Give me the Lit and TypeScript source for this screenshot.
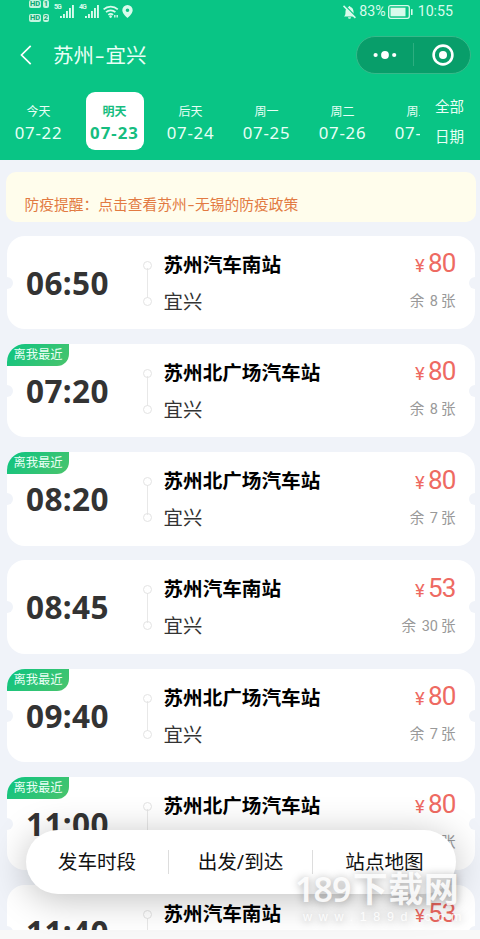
import { LitElement, css, html, nothing, svg } from 'lit'
import { customElement, property } from 'lit/decorators.js'
import { classMap } from 'lit/directives/class-map.js'

interface Trip {
  time: string
  from: string
  to: string
  price: number
  left: number
  nearest?: boolean
}

const trips: Trip[] = [
  { time: '06:50', from: '苏州汽车南站', to: '宜兴', price: 80, left: 8 },
  { time: '07:20', from: '苏州北广场汽车站', to: '宜兴', price: 80, left: 8, nearest: true },
  { time: '08:20', from: '苏州北广场汽车站', to: '宜兴', price: 80, left: 7, nearest: true },
  { time: '08:45', from: '苏州汽车南站', to: '宜兴', price: 53, left: 30 },
  { time: '09:40', from: '苏州北广场汽车站', to: '宜兴', price: 80, left: 7, nearest: true },
  { time: '11:00', from: '苏州北广场汽车站', to: '宜兴', price: 80, left: 7, nearest: true },
  { time: '11:40', from: '苏州汽车南站', to: '宜兴', price: 53, left: 30 },
]

const days = [
  { label: '今天', date: '07-22' },
  { label: '明天', date: '07-23', active: true },
  { label: '后天', date: '07-24' },
  { label: '周一', date: '07-25' },
  { label: '周二', date: '07-26' },
  { label: '周三', date: '07-27' },
]

@customElement('status-bar')
export class StatusBar extends LitElement {
  private renderSignal(label: string) {
    return html`
      <span class="net">${label}</span>
      <svg class="signal" width="14" height="13" viewBox="0 0 14 13" fill="currentColor">
        ${[2, 4, 7, 10, 13].map((h, i) => svg`<rect x=${i * 3} y=${13 - h} width="1.9" height=${h} />`)}
      </svg>
    `
  }

  protected render() {
    return html`
      <div class="sims">
        <div><b class="hd">HD</b><b>1</b></div>
        <div><b class="hd">HD</b><b>2</b></div>
      </div>
      ${this.renderSignal('5G')} ${this.renderSignal('4G')}
      <svg width="16" height="13" viewBox="0 0 16 13" fill="none" stroke="currentColor" stroke-width="1.7">
        <path d="M.6 4.4a10.5 10.5 0 0 1 14.2 0M3 7.2a7 7 0 0 1 9.4 0M5.3 9.8a3.7 3.7 0 0 1 4.8 0" />
        <circle cx="7.6" cy="11.6" r="1.3" fill="currentColor" stroke="none" />
        <path d="M11.8 10v2.6M14.2 10v2.6" stroke-width="1.4" />
      </svg>
      <svg class="pin" width="11" height="13" viewBox="0 0 11 13" fill="currentColor">
        <path
          fill-rule="evenodd"
          d="M5.5 0A5.2 5.2 0 0 0 .3 5.2C.3 8.6 5.5 13 5.5 13s5.2-4.4 5.2-7.8A5.2 5.2 0 0 0 5.5 0zm0 3.5a1.8 1.8 0 1 1 0 3.6 1.8 1.8 0 0 1 0-3.6z"
        />
      </svg>
      <span class="space"></span>
      <svg width="13" height="14" viewBox="0 0 13 14" fill="currentColor">
        <path
          d="M1 11.5c1.200-1 1.500-2 1.500-5C2.500 4 3.800 2.300 5.600 1.900a.9.9 0 0 1 1.800 0c1.800.4 3.100 2.100 3.100 4.600 0 3 .3 4 1.500 5zM5 12.200h3a1.500 1.500 0 0 1-3 0z"
        />
        <path d="M1.7.3 13.2 11.9" stroke="#09c585" stroke-width="1.5" />
        <path d="M.5.9 12.4 12.9" stroke="currentColor" stroke-width="1.5" />
      </svg>
      <span class="percent">83%</span>
      <svg class="battery" width="25" height="14" viewBox="0 0 25 14" fill="currentColor">
        <rect x=".7" y=".7" width="20.6" height="12.6" rx="2" fill="none" stroke="currentColor" stroke-width="1.3" />
        <rect x="2.5" y="2.7" width="15" height="8.6" />
        <rect x="23" y="4" width="1.6" height="6" rx=".6" />
      </svg>
      <span class="clock">10:55</span>
    `
  }

  static styles = css`
    :host {
      display: flex;
      align-items: center;
      height: 23px;
      padding: 0 27px 0 29px;
      color: #d9fbec;
      font: 14.2px / 23px Roboto, sans-serif;
    }
    .sims {
      display: flex;
      flex-direction: column;
      gap: 6px;
      height: 23px;
      margin-right: 5px;
    }
    .sims div {
      display: flex;
      gap: 2px;
    }
    b {
      width: 6px;
      height: 8px;
      border-radius: 2px;
      background: #c3f5e0;
      color: #09a771;
      text-align: center;
      font-size: 7.5px;
      line-height: 8px;
    }
    .hd {
      width: 12px;
    }
    .net {
      align-self: flex-start;
      width: 6px;
      margin-top: 3px;
      font-size: 7px;
      font-weight: bold;
      line-height: 8px;
      letter-spacing: -1px;
    }
    .signal {
      margin-right: 5px;
    }
    .signal + svg {
      margin-left: -1px;
    }
    .pin {
      margin-left: 3px;
    }
    .space {
      flex: 1;
    }
    .percent {
      margin: 0 2px 0 3px;
    }
    .battery {
      margin-right: 5px;
    }
  `
}

@customElement('trip-card')
export class TripCard extends LitElement {
  @property({ attribute: false })
  trip!: Trip

  protected render() {
    const { time, from, to, price, left, nearest } = this.trip
    return html`
      ${nearest ? html`<span class="tag">离我最近</span>` : nothing}
      <div class="time">${time}</div>
      <div class="route"><i></i><i></i></div>
      <div class="stops">
        <div class="from">${from}</div>
        <div class="to">${to}</div>
      </div>
      <div class="fare">
        <div class="price"><small>¥</small>${price}</div>
        <div class="left">余 <span>${left}</span>张</div>
      </div>
    `
  }

  static styles = css`
    :host {
      position: relative;
      display: flex;
      align-items: flex-start;
      box-sizing: border-box;
      height: 93.5px;
      padding: 0 19px;
      border-radius: 18px;
      background: #fff;
      overflow: hidden;
    }
    :host::before,
    :host::after {
      content: '';
      position: absolute;
      top: 41px;
      width: 12px;
      height: 12px;
      border-radius: 50%;
      background: #f0f3f9;
    }
    :host::before {
      left: -6px;
    }
    :host::after {
      right: -6px;
    }
    .tag {
      position: absolute;
      left: 0;
      top: 0;
      width: 62px;
      height: 22px;
      border-bottom-right-radius: 12px;
      background: linear-gradient(135deg, #0cc482, #4ac46c);
      color: #e9fff5;
      text-align: center;
      font-size: 12.3px;
      line-height: 22px;
    }
    .time {
      width: 117px;
      padding-top: 27px;
      color: #333;
      font: bold 31.5px / 40px 'Noto Sans', sans-serif;
      letter-spacing: 0.4px;
    }
    .route {
      display: flex;
      flex-direction: column;
      align-items: center;
      justify-content: space-between;
      width: 9px;
      height: 45px;
      margin: 25px 12px 0 0;
      background: linear-gradient(#e8e8e8, #e8e8e8) center / 1px 30px no-repeat;
    }
    i {
      box-sizing: border-box;
      width: 9px;
      height: 9px;
      border: 1px solid #e3e3e3;
      border-radius: 50%;
    }
    .stops {
      flex: 1;
      margin-left: -0.5px;
      white-space: nowrap;
    }
    .from {
      margin-top: 15px;
      color: #000;
      font-size: 19.6px;
      font-weight: bold;
      line-height: 28px;
    }
    .to {
      margin-top: 8px;
      color: #333;
      font-size: 19.4px;
      line-height: 29px;
    }
    .fare {
      text-align: right;
    }
    .price {
      margin-top: 10.5px;
      color: #ee6a62;
      font: 26px / 34px Roboto, sans-serif;
      letter-spacing: -0.8px;
    }
    small {
      margin-right: 4px;
      font-size: 18.5px;
    }
    .left {
      margin-top: 8px;
      color: #999;
      font: 14.5px / 22px Roboto, 'Noto Sans CJK SC', sans-serif;
    }
    .left span {
      margin: 0 3px 0 2px;
    }
  `
}

@customElement('app-root')
export class AppRoot extends LitElement {
  protected render() {
    return html`
      <header>
        <status-bar></status-bar>
        <div class="nav">
          <svg class="back" width="12" height="20" viewBox="0 0 12 20" fill="none" stroke="#fff" stroke-width="1.7">
            <path d="M10.7.8 1.5 10l9.2 9.2" />
          </svg>
          <h1>苏州<span class="dash">-</span>宜兴</h1>
          <div class="capsule">
            <svg width="24" height="8" viewBox="0 0 24 8" fill="#fff">
              <circle cx="2.6" cy="4" r="2.1" />
              <circle cx="12" cy="4" r="3.9" />
              <circle cx="21.2" cy="4" r="2.1" />
            </svg>
            <span class="split"></span>
            <svg width="22" height="22" viewBox="0 0 22 22" fill="none">
              <circle cx="11" cy="11" r="9.4" stroke="#fff" stroke-width="2.6" />
              <circle cx="11" cy="11" r="4" fill="#fff" />
            </svg>
          </div>
        </div>
        <div class="dates">
          <div class="days">
            ${days.map(
              (d) => html`
                <div class=${classMap({ day: true, active: !!d.active })}>
                  <span class="label">${d.label}</span>
                  <span class="date">${d.date}</span>
                </div>
              `
            )}
          </div>
          <div class="all"><span>全部</span><span>日期</span></div>
        </div>
      </header>
      <main>
        <div class="notice">防疫提醒：点击查看苏州<span class="dash">-</span>无锡的防疫政策</div>
        <div class="list">${trips.map((t) => html`<trip-card .trip=${t}></trip-card>`)}</div>
      </main>
      <footer></footer>
      <div class="filters">
        <span>发车时段</span>
        <span>出发/到达</span>
        <span>站点地图</span>
      </div>
      <div class="mark">
        <div class="name">189<span>下载网</span></div>
        <div class="site">www.189d.com</div>
      </div>
    `
  }

  static styles = css`
    :host {
      position: relative;
      display: flex;
      flex-direction: column;
      width: 480px;
      height: 939px;
      overflow: hidden;
      background: #f0f3f9;
      font-family: 'Noto Sans', 'Noto Sans CJK SC', sans-serif;
    }
    header {
      flex: none;
      height: 159.5px;
      background: #09c585;
      color: #e8fff6;
    }
    .nav {
      display: flex;
      align-items: center;
      height: 63px;
      padding: 0 9.5px 0 20px;
    }
    .back {
      margin-right: 21px;
    }
    h1 {
      flex: 1;
      margin: 0 0 2px;
      font-size: 20.5px;
      font-weight: 400;
    }
    .dash {
      display: inline-block;
      padding: 0 0.12em;
      transform: scaleX(1.5);
    }
    .capsule {
      display: flex;
      align-items: center;
      justify-content: space-between;
      box-sizing: border-box;
      width: 115px;
      height: 38px;
      padding: 0 16px;
      border: 1px solid #36b98a;
      border-radius: 19px;
      background: #089e6a;
    }
    .split {
      width: 1px;
      height: 23px;
      margin-right: 2px;
      background: #2dae80;
    }
    .dates {
      display: flex;
      height: 73px;
    }
    .days {
      display: flex;
      gap: 18px;
      width: 420px;
      padding: 6px 0 0 9.5px;
      box-sizing: border-box;
      overflow: hidden;
    }
    .day {
      flex: none;
      display: flex;
      flex-direction: column;
      align-items: center;
      box-sizing: border-box;
      width: 58px;
      height: 58px;
      padding-top: 9px;
      border-radius: 9px;
      white-space: nowrap;
    }
    .day.active {
      background: #fff;
      color: #16bd80;
      font-weight: bold;
    }
    .label {
      font-size: 12px;
      line-height: 21px;
    }
    .date {
      font-size: 16.8px;
      line-height: 21px;
      letter-spacing: 0.75px;
    }
    .active .date {
      letter-spacing: 1px;
    }
    .all {
      display: flex;
      flex-direction: column;
      padding: 6px 0 0 15px;
      font-size: 14.5px;
      line-height: 29.5px;
    }
    main {
      flex: none;
      height: 770.5px;
      overflow: hidden;
    }
    .notice {
      height: 50px;
      margin: 12.5px 4px 13.5px 6px;
      padding: 7px 18.5px 0;
      box-sizing: border-box;
      border-radius: 10px;
      background: #fffdec;
      color: #e27a42;
      font-size: 14.75px;
      line-height: 50px;
    }
    .list {
      display: flex;
      flex-direction: column;
      gap: 14.8px;
      padding: 0 5.5px 0 7px;
    }
    .list > * {
      flex: none;
    }
    footer {
      flex: 1;
      background: #f8f8f8;
    }
    .filters {
      position: absolute;
      left: 26px;
      top: 830px;
      display: grid;
      grid-template-columns: 142px 144px 144px;
      align-items: center;
      width: 430px;
      height: 64px;
      border-radius: 32px;
      background: #fff;
      box-shadow: 0 5px 36px rgba(0, 0, 0, 0.25);
      color: #111;
      text-align: center;
      font-size: 19.6px;
      line-height: 24px;
    }
    .filters span + span {
      border-left: 1px solid #ddd;
    }
    .mark {
      position: absolute;
      left: 295px;
      top: 868px;
      color: rgba(255, 255, 255, 0.88);
      text-shadow: 0 1px 8px rgba(0, 0, 0, 0.35);
      white-space: nowrap;
    }
    .name {
      font-size: 34px;
      font-weight: 600;
      line-height: 42px;
      letter-spacing: -0.9px;
    }
    .name span {
      margin-left: 2px;
      font-size: 35px;
      font-weight: bold;
      letter-spacing: 0.5px;
    }
    .site {
      padding-left: 8px;
      font: 12.5px / 14px 'Liberation Sans', sans-serif;
      letter-spacing: 6.7px;
    }
  `
}

declare global {
  interface HTMLElementTagNameMap {
    'app-root': AppRoot
    'status-bar': StatusBar
    'trip-card': TripCard
  }
}
